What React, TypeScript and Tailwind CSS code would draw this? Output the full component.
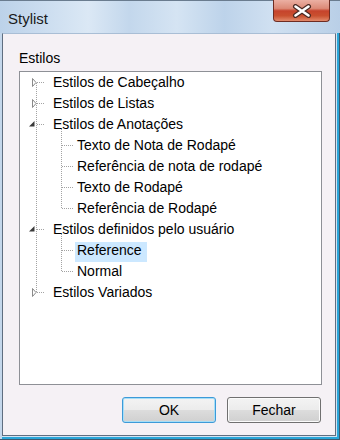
import React from 'react'

type Row = { label: string; level: 0 | 1; state?: 'open' | 'closed'; selected?: boolean }

const rows: Row[] = [
  { label: 'Estilos de Cabeçalho', level: 0, state: 'closed' },
  { label: 'Estilos de Listas', level: 0, state: 'closed' },
  { label: 'Estilos de Anotações', level: 0, state: 'open' },
  { label: 'Texto de Nota de Rodapé', level: 1 },
  { label: 'Referência de nota de rodapé', level: 1 },
  { label: 'Texto de Rodapé', level: 1 },
  { label: 'Referência de Rodapé', level: 1 },
  { label: 'Estilos definidos pelo usuário', level: 0, state: 'open' },
  { label: 'Reference', level: 1, selected: true },
  { label: 'Normal', level: 1 },
  { label: 'Estilos Variados', level: 0, state: 'closed' },
]

const ROW_H = 21
const lineY = (i: number) => 10.5 + ROW_H * i

function TreeLines() {
  const dots = { stroke: '#a3a3a3', strokeWidth: 1, strokeDasharray: '1 1', shapeRendering: 'crispEdges' as const }
  // vertical runs for the children of each open node
  const runs: [number, number][] = []
  rows.forEach((r, i) => {
    if (r.state === 'open') {
      let last = i
      for (let j = i + 1; j < rows.length && rows[j].level === 1; j++) last = j
      runs.push([i, last])
    }
  })
  return (
    <svg className="absolute left-0 top-0" width="60" height="240">
      <line x1="16.5" y1={lineY(0)} x2="16.5" y2={lineY(rows.length - 1)} {...dots} />
      {runs.map(([a, b]) => (
        <line key={a} x1="41.5" y1={lineY(a) + 4} x2="41.5" y2={lineY(b)} {...dots} />
      ))}
      {rows.map((r, i) =>
        r.level === 0 ? (
          <line key={i} x1="17" y1={lineY(i)} x2="24" y2={lineY(i)} {...dots} />
        ) : (
          <line key={i} x1="42" y1={lineY(i)} x2="54" y2={lineY(i)} {...dots} />
        )
      )}
      {rows.map((r, i) => {
        const y = lineY(i)
        if (r.state === 'closed')
          return (
            <polygon
              key={'t' + i}
              points={`12.5,${y - 4} 16,${y} 12.5,${y + 4}`}
              fill="#ffffff"
              stroke="#8a8a8a"
              strokeWidth="1"
            />
          )
        if (r.state === 'open')
          return <polygon key={'t' + i} points={`14.5,${y - 3.5} 14.5,${y + 2} 9,${y + 2}`} fill="#3a3a3a" />
        return null
      })}
    </svg>
  )
}

function Button({ label, focused }: { label: string; focused?: boolean }) {
  return (
    <button
      className={
        focused
          ? 'w-[94px] h-[26px] rounded-[3px] border border-[#3c9ad8] shadow-[inset_0_0_0_1px_#a6def7] bg-[linear-gradient(#f3f3f3_0%,#ececec_48%,#dcdcdc_52%,#d0d0d0_100%)] text-[14px] text-black'
          : 'w-[94px] h-[26px] rounded-[3px] border border-[#707070] shadow-[inset_0_0_0_1px_#fbfbfb] bg-[linear-gradient(#f3f3f3_0%,#ececec_48%,#dcdcdc_52%,#d0d0d0_100%)] text-[14px] text-black'
      }
    >
      {label}
    </button>
  )
}

export default function App() {
  return (
    <div className="w-[340px] h-[440px] flex flex-col overflow-hidden bg-[#c4d7eb] font-['Liberation_Sans',Arial,sans-serif] text-black">
      {/* title bar */}
      <div className="h-[33px] flex items-start border-t border-[#6a7c8f] bg-[linear-gradient(90deg,#bcd2e9_0%,#cadcef_12%,#dbe8f5_26%,#c3d7ec_38%,#d5e4f3_52%,#bdd3ea_66%,#d0e0f1_80%,#c2d6eb_92%,#b9cfe7_100%)]">
        <span className="flex-1 pl-[8px] pt-[9px] text-[15px] leading-[17px] text-[#1a1a1a]">Stylist</span>
        <div className="mr-[10px] -mt-px w-[57px] h-[22px] rounded-b-[4px] border border-t-0 border-[#6e2c22] bg-[linear-gradient(#ebb0a3_0%,#dc8a77_40%,#c6432c_52%,#c9502f_75%,#e28a6c_100%)] flex items-center justify-center">
          <svg width="20" height="14" viewBox="0 0 20 14">
            <path d="M3.5 2.5 L16.5 11.5 M16.5 2.5 L3.5 11.5" stroke="#4a2a24" strokeWidth="5" strokeLinecap="round" />
            <path d="M3.5 2.5 L16.5 11.5 M16.5 2.5 L3.5 11.5" stroke="#ffffff" strokeWidth="2.6" strokeLinecap="round" />
          </svg>
        </div>
      </div>

      {/* frame + client */}
      <div className="flex-1 flex pl-[2px] border-r border-b border-[#3d5a70]">
        <div className="flex-1 flex border-r-2 border-b-2 border-[#29a6d9]">
          <div className="flex-1 flex pr-px pb-px bg-[#d3e3f2]">
            <div className="flex-1 flex flex-col border border-[#5f6e80] border-t-[#a9bed5] bg-[#f5f1f5]">
              <span className="pl-[16px] pt-[16px] text-[14px] leading-[17px]">Estilos</span>
              <div className="ml-[16px] mt-[4px] w-[303px] h-[314px] border border-[#8e9096] bg-white">
                <div className="relative pt-[2px]">
                  <TreeLines />
                  {rows.map((r) => (
                    <div
                      key={r.label}
                      className={r.level === 0 ? 'h-[21px] flex items-start pl-[31px]' : 'h-[21px] flex items-start pl-[55px]'}
                    >
                      <span
                        className={
                          r.selected
                            ? 'relative h-[20px] pl-[2px] pr-[5px] text-[14px] leading-[17px] whitespace-nowrap bg-[#cce8ff]'
                            : 'relative h-[20px] px-[2px] text-[14px] leading-[17px] whitespace-nowrap'
                        }
                      >
                        {r.label}
                      </span>
                    </div>
                  ))}
                </div>
              </div>
              <div className="mt-[12px] flex justify-end gap-[11px] pr-[14px]">
                <Button label="OK" focused />
                <Button label="Fechar" />
              </div>
            </div>
          </div>
        </div>
      </div>
    </div>
  )
}
